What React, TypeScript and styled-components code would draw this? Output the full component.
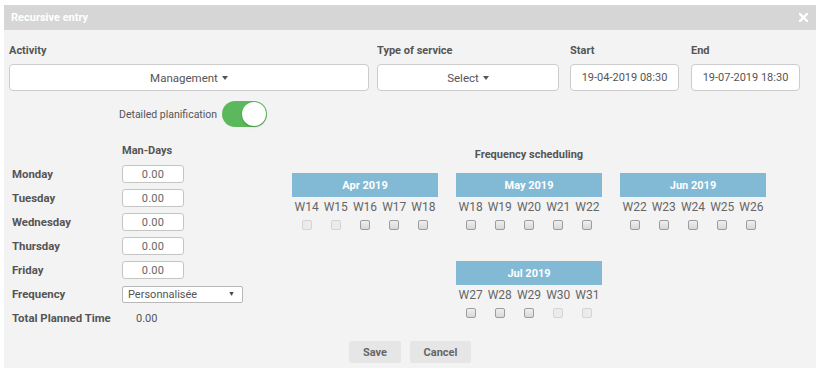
import React from "react";
import styled, { createGlobalStyle } from "styled-components";

const Global = createGlobalStyle`
  html, body { margin: 0; padding: 0; background: #fff; }
  body { font-family: Roboto, "Liberation Sans", Arial, sans-serif; color: #555; }
  * { box-sizing: border-box; }
`;

const Dialog = styled.div`
  margin: 5px 4px 0;
  width: 812px;
  background: #f3f3f3;
  display: flex;
  flex-direction: column;
`;

const Header = styled.div`
  height: 25px;
  background: #d6d6d6;
  display: flex;
  align-items: center;
  justify-content: space-between;
  padding: 0 8px 0 7px;
  color: #fff;
  font-weight: bold;
  font-size: 11px;
`;

const Body = styled.div`
  padding: 13px 5px 5px 5px;
  display: flex;
  flex-direction: column;
`;

const TopRow = styled.div`
  display: flex;
`;

const Field = styled.div<{ $w: number; $ml?: number }>`
  width: ${(p) => p.$w}px;
  margin-left: ${(p) => p.$ml ?? 0}px;
  display: flex;
  flex-direction: column;
`;

const Label = styled.div`
  font-size: 11px;
  font-weight: bold;
  line-height: 14px;
  height: 14px;
  margin-top: 1px;
  margin-bottom: 6px;
  color: #555;
`;

const Box = styled.div<{ $size?: number }>`
  height: 27px;
  background: #fff;
  border: 1px solid #ccc;
  border-radius: 4px;
  display: flex;
  align-items: center;
  justify-content: center;
  font-size: ${(p) => p.$size ?? 11.5}px;
  color: #555;
`;

const Caret = styled.span`
  display: inline-block;
  width: 0;
  height: 0;
  margin-left: 4px;
  border-left: 3.5px solid transparent;
  border-right: 3.5px solid transparent;
  border-top: 4px solid #555;
`;

const ToggleRow = styled.div`
  display: flex;
  align-items: center;
  margin-top: 10px;
  padding-left: 110px;
  gap: 5px;
  font-size: 10.5px;
  color: #555;
`;

const Toggle = styled.div`
  width: 45px;
  height: 26px;
  border-radius: 13px;
  background: #5cb85c;
  display: flex;
  align-items: center;
  justify-content: flex-end;
  padding-right: 1px;
`;

const Knob = styled.div`
  width: 24px;
  height: 24px;
  border-radius: 50%;
  background: #fff;
  box-shadow: 0 1px 2px rgba(0, 0, 0, 0.25);
`;

const Lower = styled.div`
  display: flex;
  margin-top: 17px;
`;

const LeftCol = styled.div`
  width: 283px;
  padding-left: 3px;
  display: flex;
  flex-direction: column;
`;

const ColHead = styled.div`
  font-size: 11px;
  font-weight: bold;
  line-height: 14px;
  height: 14px;
  color: #555;
`;

const LeftHead = styled(ColHead)`
  padding-left: 110px;
  margin-bottom: 4px;
`;

const Row = styled.div`
  height: 24px;
  display: flex;
  align-items: center;
`;

const RowLabel = styled.div<{ $w?: number }>`
  width: ${(p) => p.$w ?? 110}px;
  font-size: 11.4px;
  font-weight: bold;
  color: #555;
  white-space: nowrap;
`;

const NumBox = styled.div`
  width: 62px;
  height: 18px;
  background: #fff;
  border: 1px solid #c4c4c4;
  border-radius: 3px;
  display: flex;
  align-items: center;
  justify-content: center;
  font-size: 11px;
  letter-spacing: 0.3px;
  color: #666;
`;

const SmallSelect = styled.div`
  width: 121px;
  height: 17px;
  background: #fff;
  border: 1px solid #b8b8b8;
  border-radius: 2px;
  display: flex;
  align-items: center;
  justify-content: space-between;
  padding: 0 7px 0 5px;
  font-size: 11px;
  color: #555;
`;

const SmallArrow = styled.span`
  font-size: 7px;
  color: #444;
`;

const Value = styled.div`
  font-size: 11px;
  color: #555;
`;

const RightCol = styled.div`
  display: flex;
  flex-direction: column;
  width: 474px;
  padding-top: 4px;
`;

const CenterHead = styled(ColHead)`
  text-align: center;
  margin-bottom: 11px;
`;

const MonthGrid = styled.div`
  display: grid;
  grid-template-columns: repeat(3, 146px);
  column-gap: 18px;
  row-gap: 31px;
`;

const Month = styled.div<{ $col?: number }>`
  grid-column: ${(p) => p.$col ?? "auto"};
  display: flex;
  flex-direction: column;
`;

const MonthHead = styled.div`
  height: 24px;
  background: #82b9d5;
  color: #fff;
  font-size: 11px;
  font-weight: bold;
  display: flex;
  align-items: center;
  justify-content: center;
`;

const Weeks = styled.div`
  display: grid;
  grid-template-columns: repeat(5, 1fr);
  margin-top: 3px;
`;

const WeekCell = styled.div`
  display: flex;
  flex-direction: column;
  align-items: center;
`;

const WeekLabel = styled.div`
  font-size: 12px;
  line-height: 14px;
  color: #666;
`;

const Check = styled.div<{ $disabled?: boolean }>`
  margin-top: 6px;
  width: 10px;
  height: 10px;
  border-radius: 2px;
  border: 1px solid ${(p) => (p.$disabled ? "#d4d4d4" : "#9c9c9c")};
  background: ${(p) =>
    p.$disabled ? "#ebebeb" : "linear-gradient(#efefef, #d8d8d8)"};
`;

const Buttons = styled.div`
  display: flex;
  justify-content: center;
  gap: 9px;
  margin-top: 11px;
`;

const Btn = styled.div<{ $w: number }>`
  width: ${(p) => p.$w}px;
  height: 22px;
  background: #e6e6e6;
  border-radius: 2px;
  display: flex;
  align-items: center;
  justify-content: center;
  font-size: 11px;
  font-weight: bold;
  color: #666;
`;

type MonthData = { name: string; weeks: string[]; disabled: number[]; col?: number };

const months: MonthData[] = [
  { name: "Apr 2019", weeks: ["W14", "W15", "W16", "W17", "W18"], disabled: [0, 1] },
  { name: "May 2019", weeks: ["W18", "W19", "W20", "W21", "W22"], disabled: [] },
  { name: "Jun 2019", weeks: ["W22", "W23", "W24", "W25", "W26"], disabled: [] },
  { name: "Jul 2019", weeks: ["W27", "W28", "W29", "W30", "W31"], disabled: [3, 4], col: 2 },
];

const days = ["Monday", "Tuesday", "Wednesday", "Thursday", "Friday"];

export default function App() {
  return (
    <>
      <Global />
      <Dialog>
        <Header>
          <span>Recursive entry</span>
          <svg width="9" height="9" viewBox="0 0 9 9">
            <path d="M1 1 L8 8 M8 1 L1 8" stroke="#fff" strokeWidth="2.4" strokeLinecap="square" />
          </svg>
        </Header>
        <Body>
          <TopRow>
            <Field $w={360}>
              <Label>Activity</Label>
              <Box>
                Management<Caret />
              </Box>
            </Field>
            <Field $w={182} $ml={8}>
              <Label>Type of service</Label>
              <Box>
                Select<Caret />
              </Box>
            </Field>
            <Field $w={109} $ml={11}>
              <Label>Start</Label>
              <Box $size={11}>19-04-2019 08:30</Box>
            </Field>
            <Field $w={109} $ml={12}>
              <Label>End</Label>
              <Box $size={11}>19-07-2019 18:30</Box>
            </Field>
          </TopRow>
          <ToggleRow>
            <span>Detailed planification</span>
            <Toggle>
              <Knob />
            </Toggle>
          </ToggleRow>
          <Lower>
            <LeftCol>
              <LeftHead>Man-Days</LeftHead>
              {days.map((d) => (
                <Row key={d}>
                  <RowLabel>{d}</RowLabel>
                  <NumBox>0.00</NumBox>
                </Row>
              ))}
              <Row>
                <RowLabel>Frequency</RowLabel>
                <SmallSelect>
                  <span>Personnalisée</span>
                  <SmallArrow>▼</SmallArrow>
                </SmallSelect>
              </Row>
              <Row>
                <RowLabel $w={124}>Total Planned Time</RowLabel>
                <Value>0.00</Value>
              </Row>
            </LeftCol>
            <RightCol>
              <CenterHead>Frequency scheduling</CenterHead>
              <MonthGrid>
                {months.map((m) => (
                  <Month key={m.name} $col={m.col}>
                    <MonthHead>{m.name}</MonthHead>
                    <Weeks>
                      {m.weeks.map((w, i) => (
                        <WeekCell key={w}>
                          <WeekLabel>{w}</WeekLabel>
                          <Check $disabled={m.disabled.includes(i)} />
                        </WeekCell>
                      ))}
                    </Weeks>
                  </Month>
                ))}
              </MonthGrid>
            </RightCol>
          </Lower>
          <Buttons>
            <Btn $w={52}>Save</Btn>
            <Btn $w={61}>Cancel</Btn>
          </Buttons>
        </Body>
      </Dialog>
    </>
  );
}
